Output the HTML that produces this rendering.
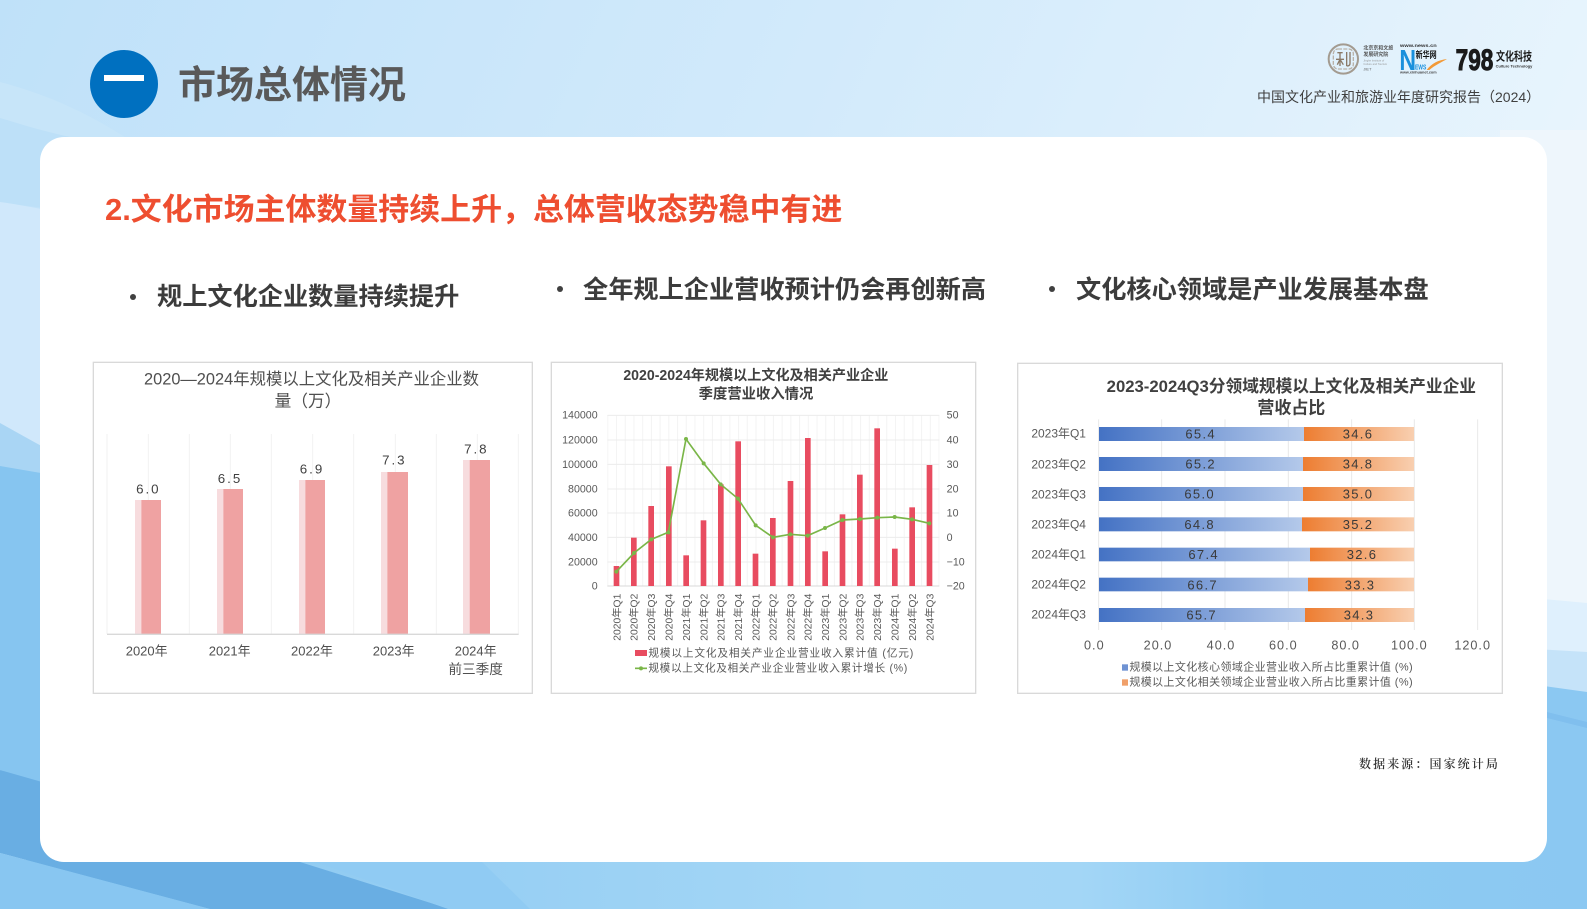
<!DOCTYPE html>
<html lang="zh">
<head>
<meta charset="utf-8">
<title>市场总体情况</title>
<style>
html,body{margin:0;padding:0;width:1587px;height:909px;overflow:hidden;background:#cfe7fa}
body{position:relative;font-family:"Liberation Sans","Noto Sans CJK SC",sans-serif}
.a{position:absolute;white-space:nowrap}
svg{position:absolute;left:0;top:0}
svg text{font-family:"Liberation Sans","Noto Sans CJK SC",sans-serif}
.card{left:40px;top:137px;width:1507px;height:725px;background:#fff;border-radius:24px}
.sub{font-size:25.2px;font-weight:700;color:#3c3c3c;line-height:34px}
.dot{width:6px;height:6px;border-radius:50%;background:#404040}
</style>
</head>
<body>
<svg width="1587" height="909" viewBox="0 0 1587 909">
  <defs>
    <linearGradient id="bg" x1="0" y1="0" x2="1" y2="0.25">
      <stop offset="0" stop-color="#bfe1f9"/>
      <stop offset=".5" stop-color="#d2eafb"/>
      <stop offset="1" stop-color="#e9f5fd"/>
    </linearGradient>
    <linearGradient id="low" x1="0" y1="0" x2="1" y2="0">
      <stop offset="0" stop-color="#86c5f0"/>
      <stop offset=".55" stop-color="#a5d7f6"/>
      <stop offset=".68" stop-color="#a3d6f6"/>
      <stop offset=".8" stop-color="#8ecbf3"/>
      <stop offset="1" stop-color="#8bc8f2"/>
    </linearGradient>
  </defs>
  <rect width="1587" height="909" fill="url(#bg)"/>
  <rect x="1500" y="130" width="87" height="480" fill="#eef6fc"/>
  <path d="M0 82C50 95 90 115 125 137H0Z" fill="#c7e5f9"/>
  <path d="M0 118C15 122 30 128 70 137V210C30 207 15 204 0 202Z" fill="#bde0f8"/>
  <path d="M0 202C15 204 30 207 70 214V460L0 425Z" fill="#d0e8fb"/>
  <path d="M0 423L70 462V484L0 470Z" fill="#a9d5f4"/>
  <path d="M0 466L70 478V795L0 770Z" fill="#86c5f0"/>
  <path d="M1500 595L1587 603V660H1500Z" fill="#dff0fd"/>
  <path d="M1500 647L1587 652V695H1500Z" fill="#c5e3f9"/>
  <path d="M1500 680L1587 692V909H1500Z" fill="#8bc8f2"/>
  <path d="M1547 712L1587 722V728L1547 718Z" fill="#80bfee"/>
  <rect y="860" width="1587" height="49" fill="url(#low)"/>
  <path d="M0 770L70 790V862H300L450 909H210L0 853Z" fill="#69aee3"/>
  <path d="M310 860L448 909H530L480 860Z" fill="#90cbf3"/>
  <path d="M0 853L210 909H0Z" fill="#88c6f1"/>
</svg>

<div class="a card"></div>

<div class="a" style="left:90px;top:50px;width:68px;height:68px;border-radius:50%;background:#0070c0"></div>
<div class="a" style="left:104px;top:75px;width:40px;height:6px;background:#fff"></div>
<div class="a" style="left:178px;top:63px;font-size:38px;line-height:46px;font-weight:700;color:#595959">市场总体情况</div>
<div class="a" style="left:1257px;top:87px;font-size:14px;line-height:20px;color:#404040">中国文化产业和旅游业年度研究报告（2024）</div>

<div class="a" style="left:105px;top:190px;font-size:30.95px;line-height:40px;font-weight:700;color:#ee4e30">2.文化市场主体数量持续上升，总体营收态势稳中有进</div>

<div class="a dot" style="left:130px;top:294px"></div>
<div class="a sub" style="left:157px;top:280px">规上文化企业数量持续提升</div>
<div class="a dot" style="left:557px;top:286px"></div>
<div class="a sub" style="left:583px;top:273px">全年规上企业营收预计仍会再创新高</div>
<div class="a dot" style="left:1049px;top:286px"></div>
<div class="a sub" style="left:1076px;top:273px">文化核心领域是产业发展基本盘</div>

<div class="a" style="left:1359px;top:755px;font-family:'Liberation Serif','Noto Serif CJK SC',serif;font-size:12px;line-height:18px;letter-spacing:2.1px;color:#333;font-weight:600">数据来源：国家统计局</div>

<svg width="1587" height="909" viewBox="0 0 1587 909">
  <defs>
    <pattern id="vg" x="172" y="0" width="26.15" height="10" patternUnits="userSpaceOnUse">
      <rect width="3" height="10" fill="#f3f3f3"/>
    </pattern>
    <linearGradient id="bl" x1="0" y1="0" x2="1" y2="0">
      <stop offset="0" stop-color="#4472c4"/>
      <stop offset="1" stop-color="#b4c9ea"/>
    </linearGradient>
    <linearGradient id="or" x1="0" y1="0" x2="1" y2="0">
      <stop offset="0" stop-color="#ed7d31"/>
      <stop offset="1" stop-color="#f8cfb0"/>
    </linearGradient>
  </defs>

  <!-- logos -->
  <g transform="translate(1300 30) scale(.33333)">
    <circle cx="130" cy="87" r="44" fill="none" stroke="#a39b90" stroke-width="6"/>
    <rect x="100" y="57" width="60" height="60" rx="14" fill="none" stroke="#b9b2a8" stroke-width="4" stroke-dasharray="12 4"/>
    <path d="M112 68H128M120 68V108M108 88H132M112 104L120 88L130 104M140 66V108M150 66V100C150 106 146 108 140 108" fill="none" stroke="#8a7a68" stroke-width="4"/>
    <text x="190" y="58" font-size="15" font-weight="700" fill="#555">北京京和文旅</text>
    <text x="190" y="78" font-size="15" font-weight="700" fill="#555">发展研究院</text>
    <text x="190" y="95" font-size="8" fill="#999">Jinghe Institute of</text>
    <text x="190" y="105" font-size="8" fill="#999">Culture and Tourism</text>
    <text x="190" y="122" font-size="12" fill="#666">JIET</text>

    <text x="300" y="51" font-size="14" font-weight="700" fill="#333" textLength="110" lengthAdjust="spacingAndGlyphs">www.news.cn</text>
    <text x="298" y="120" font-size="86" font-weight="700" fill="#1a90dc" textLength="50" lengthAdjust="spacingAndGlyphs">N</text>
    <text x="347" y="84" font-size="27" font-weight="700" fill="#111" textLength="63" lengthAdjust="spacingAndGlyphs">新华网</text>
    <text x="345" y="118" font-size="21" font-weight="700" fill="#1a90dc" textLength="34" lengthAdjust="spacingAndGlyphs">EWS</text>
    <path d="M380 120C395 100 415 90 441 87C425 97 405 105 388 120Z" fill="#f29a38"/>
    <text x="300" y="131" font-size="11" font-weight="700" fill="#444" textLength="110" lengthAdjust="spacingAndGlyphs">www.xinhuanet.com</text>

    <text x="467" y="120" font-size="90" font-weight="700" fill="#1a1a1a" stroke="#1a1a1a" stroke-width="3" textLength="113" lengthAdjust="spacingAndGlyphs">798</text>
    <text x="588" y="92" font-size="36" font-weight="700" fill="#1a1a1a" textLength="108" lengthAdjust="spacingAndGlyphs">文化科技</text>
    <text x="587" y="113" font-size="12" font-weight="700" fill="#333" textLength="110" lengthAdjust="spacingAndGlyphs">Culture Technology</text>
  </g>

  <!-- chart 1 -->
  <g transform="translate(80 350) scale(.33333)">
    <rect x="40" y="37" width="1317" height="993" fill="#fff" stroke="#d9d9d9" stroke-width="4"/>
    <g fill="#4f4f4f" font-size="50">
      <text x="192" y="103" textLength="1005" lengthAdjust="spacingAndGlyphs">2020—2024年规模以上文化及相关产业企业数</text>
      <text x="684" y="169" text-anchor="middle">量（万）</text>
    </g>
    <path d="M81 252V852M205 252V852M328 252V852M451 252V852M574 252V852M698 252V852M821 252V852M946 252V852M1069 252V852M1192 252V852M1315 252V852" stroke="#f2f2f2" stroke-width="3" fill="none"/>
    <g fill="#f7dcde">
      <rect x="165" y="450" width="19" height="402"/>
      <rect x="411" y="417" width="19" height="435"/>
      <rect x="657" y="390" width="19" height="462"/>
      <rect x="903" y="366" width="19" height="486"/>
      <rect x="1149" y="330" width="20" height="522"/>
    </g>
    <g fill="#efa2a2">
      <rect x="184" y="450" width="59" height="402"/>
      <rect x="430" y="417" width="59" height="435"/>
      <rect x="676" y="390" width="59" height="462"/>
      <rect x="922" y="366" width="62" height="486"/>
      <rect x="1169" y="330" width="61" height="522"/>
    </g>
    <path d="M81 853H1316" stroke="#d9d9d9" stroke-width="4"/>
    <g text-anchor="middle" fill="#404040" font-size="40" letter-spacing="6">
      <text x="205" y="431">6.0</text>
      <text x="450" y="399">6.5</text>
      <text x="696" y="371">6.9</text>
      <text x="943" y="344">7.3</text>
      <text x="1189" y="311">7.8</text>
    </g>
    <g text-anchor="middle" fill="#4f4f4f" font-size="39">
      <text x="200" y="917">2020年</text>
      <text x="449" y="917">2021年</text>
      <text x="696" y="917">2022年</text>
      <text x="941" y="917">2023年</text>
      <text x="1187" y="917">2024年</text>
      <text x="1187" y="972" font-size="41">前三季度</text>
    </g>
  </g>

  <!-- chart 2 -->
  <g transform="translate(550 355) scale(.33333)">
    <rect x="4" y="22" width="1273" height="993" fill="#fff" stroke="#d9d9d9" stroke-width="4"/>
    <g fill="#404040" font-size="43" font-weight="700">
      <text x="220" y="75" textLength="795" lengthAdjust="spacingAndGlyphs">2020-2024年规模以上文化及相关产业企业</text>
      <text x="618" y="130" text-anchor="middle">季度营业收入情况</text>
    </g>
    <rect x="172" y="180" width="996" height="513" fill="url(#vg)"/>
    <path d="M172 181H1168M172 255H1168M172 328H1168M172 402H1168M172 474H1168M172 547H1168M172 621H1168" stroke="#ececec" stroke-width="3"/>
    <path d="M172 693H1168" stroke="#d9d9d9" stroke-width="3"/>
    <g fill="#e84c60">
      <rect x="191" y="633" width="17" height="60"/>
      <rect x="243" y="548" width="17" height="145"/>
      <rect x="295" y="453" width="17" height="240"/>
      <rect x="348" y="334" width="17" height="359"/>
      <rect x="400" y="601" width="17" height="92"/>
      <rect x="452" y="496" width="17" height="197"/>
      <rect x="504" y="388" width="17" height="305"/>
      <rect x="556" y="259" width="17" height="434"/>
      <rect x="608" y="596" width="17" height="97"/>
      <rect x="660" y="489" width="17" height="204"/>
      <rect x="713" y="378" width="17" height="315"/>
      <rect x="765" y="249" width="17" height="444"/>
      <rect x="817" y="589" width="17" height="104"/>
      <rect x="869" y="478" width="17" height="215"/>
      <rect x="921" y="359" width="17" height="334"/>
      <rect x="973" y="220" width="17" height="473"/>
      <rect x="1026" y="581" width="17" height="112"/>
      <rect x="1078" y="457" width="17" height="236"/>
      <rect x="1130" y="330" width="17" height="363"/>
    </g>
    <polyline points="199,650 252,594 304,553 355,532 408,252 461,325 512,388 564,431 617,511 669,547 721,538 773,542 825,519 877,495 930,492 982,488 1034,486 1086,493 1138,505" fill="none" stroke="#7ab648" stroke-width="5"/>
    <g fill="#7ab648">
      <circle cx="199" cy="650" r="6"/><circle cx="252" cy="594" r="6"/><circle cx="304" cy="553" r="6"/><circle cx="355" cy="532" r="6"/><circle cx="408" cy="252" r="6"/><circle cx="461" cy="325" r="6"/><circle cx="512" cy="388" r="6"/><circle cx="564" cy="431" r="6"/><circle cx="617" cy="511" r="6"/><circle cx="669" cy="547" r="6"/><circle cx="721" cy="538" r="6"/><circle cx="773" cy="542" r="6"/><circle cx="825" cy="519" r="6"/><circle cx="877" cy="495" r="6"/><circle cx="930" cy="492" r="6"/><circle cx="982" cy="488" r="6"/><circle cx="1034" cy="486" r="6"/><circle cx="1086" cy="493" r="6"/><circle cx="1138" cy="505" r="6"/>
    </g>
    <g text-anchor="end" fill="#595959" font-size="32">
      <text x="143" y="191">140000</text>
      <text x="143" y="266">120000</text>
      <text x="143" y="339">100000</text>
      <text x="143" y="413">80000</text>
      <text x="143" y="485">60000</text>
      <text x="143" y="558">40000</text>
      <text x="143" y="632">20000</text>
      <text x="143" y="704">0</text>
    </g>
    <g fill="#595959" font-size="32">
      <text x="1190" y="191">50</text>
      <text x="1190" y="266">40</text>
      <text x="1190" y="339">30</text>
      <text x="1190" y="413">20</text>
      <text x="1190" y="485">10</text>
      <text x="1190" y="558">0</text>
      <text x="1190" y="632">−10</text>
      <text x="1190" y="704">−20</text>
    </g>
    <g fill="#595959" font-size="31" text-anchor="end">
      <text transform="translate(211 716) rotate(-90)">2020年Q1</text>
      <text transform="translate(263 716) rotate(-90)">2020年Q2</text>
      <text transform="translate(315 716) rotate(-90)">2020年Q3</text>
      <text transform="translate(367 716) rotate(-90)">2020年Q4</text>
      <text transform="translate(420 716) rotate(-90)">2021年Q1</text>
      <text transform="translate(472 716) rotate(-90)">2021年Q2</text>
      <text transform="translate(524 716) rotate(-90)">2021年Q3</text>
      <text transform="translate(576 716) rotate(-90)">2021年Q4</text>
      <text transform="translate(628 716) rotate(-90)">2022年Q1</text>
      <text transform="translate(680 716) rotate(-90)">2022年Q2</text>
      <text transform="translate(733 716) rotate(-90)">2022年Q3</text>
      <text transform="translate(785 716) rotate(-90)">2022年Q4</text>
      <text transform="translate(837 716) rotate(-90)">2023年Q1</text>
      <text transform="translate(889 716) rotate(-90)">2023年Q2</text>
      <text transform="translate(941 716) rotate(-90)">2023年Q3</text>
      <text transform="translate(993 716) rotate(-90)">2023年Q4</text>
      <text transform="translate(1046 716) rotate(-90)">2024年Q1</text>
      <text transform="translate(1098 716) rotate(-90)">2024年Q2</text>
      <text transform="translate(1150 716) rotate(-90)">2024年Q3</text>
    </g>
    <rect x="255" y="885" width="36" height="18" fill="#e84c60"/>
    <path d="M255 940H291" stroke="#7ab648" stroke-width="5"/>
    <circle cx="273" cy="940" r="6" fill="#7ab648"/>
    <g fill="#595959" font-size="32">
      <text x="295" y="905" textLength="795" lengthAdjust="spacing">规模以上文化及相关产业企业营业收入累计值 (亿元)</text>
      <text x="295" y="950" textLength="777" lengthAdjust="spacing">规模以上文化及相关产业企业营业收入累计增长 (%)</text>
    </g>
  </g>

  <!-- chart 3 -->
  <g transform="translate(1020 360) scale(.33333)">
    <rect x="-7" y="10" width="1454" height="990" fill="#fff" stroke="#d9d9d9" stroke-width="4"/>
    <g fill="#404040" font-size="51" font-weight="700">
      <text x="260" y="96" textLength="1108" lengthAdjust="spacingAndGlyphs">2023-2024Q3分领域规模以上文化及相关产业企业</text>
      <text x="814" y="161" text-anchor="middle">营收占比</text>
    </g>
    <path d="M236 178V810M425 178V810M615 178V810M805 178V810M995 178V810M1183 178V810M1373 178V810" stroke="#e8e8e8" stroke-width="3"/>
    <g fill="url(#bl)">
      <rect x="237" y="201" width="615" height="42"/>
      <rect x="237" y="291" width="612" height="42"/>
      <rect x="237" y="381" width="612" height="42"/>
      <rect x="237" y="472" width="609" height="42"/>
      <rect x="237" y="563" width="633" height="41"/>
      <rect x="237" y="653" width="627" height="41"/>
      <rect x="237" y="744" width="618" height="42"/>
    </g>
    <g fill="url(#or)">
      <rect x="852" y="201" width="330" height="42"/>
      <rect x="849" y="291" width="333" height="42"/>
      <rect x="849" y="381" width="333" height="42"/>
      <rect x="846" y="472" width="336" height="42"/>
      <rect x="870" y="563" width="312" height="41"/>
      <rect x="864" y="653" width="318" height="41"/>
      <rect x="855" y="744" width="327" height="42"/>
    </g>
    <g text-anchor="middle" fill="#3a3a3a" font-size="39" letter-spacing="4">
      <text x="542" y="236">65.4</text><text x="1014" y="236">34.6</text>
      <text x="542" y="326">65.2</text><text x="1014" y="326">34.8</text>
      <text x="539" y="416">65.0</text><text x="1014" y="416">35.0</text>
      <text x="539" y="507">64.8</text><text x="1014" y="507">35.2</text>
      <text x="551" y="597">67.4</text><text x="1026" y="597">32.6</text>
      <text x="548" y="689">66.7</text><text x="1020" y="689">33.3</text>
      <text x="545" y="779">65.7</text><text x="1017" y="779">34.3</text>
    </g>
    <g fill="#595959" font-size="36">
      <text x="34" y="233">2023年Q1</text>
      <text x="34" y="325">2023年Q2</text>
      <text x="34" y="415">2023年Q3</text>
      <text x="34" y="505">2023年Q4</text>
      <text x="34" y="596">2024年Q1</text>
      <text x="34" y="686">2024年Q2</text>
      <text x="34" y="776">2024年Q3</text>
    </g>
    <g text-anchor="middle" fill="#595959" font-size="38" letter-spacing="3">
      <text x="223" y="868">0.0</text>
      <text x="414" y="868">20.0</text>
      <text x="603" y="868">40.0</text>
      <text x="790" y="868">60.0</text>
      <text x="977" y="868">80.0</text>
      <text x="1168" y="868">100.0</text>
      <text x="1358" y="868">120.0</text>
    </g>
    <rect x="306" y="913" width="18" height="19" fill="#6f93d3"/>
    <rect x="306" y="958" width="18" height="19" fill="#f0a06a"/>
    <g fill="#595959" font-size="33">
      <text x="328" y="932" textLength="850" lengthAdjust="spacing">规模以上文化核心领域企业营业收入所占比重累计值 (%)</text>
      <text x="328" y="977" textLength="850" lengthAdjust="spacing">规模以上文化相关领域企业营业收入所占比重累计值 (%)</text>
    </g>
  </g>
</svg>
</body>
</html>
